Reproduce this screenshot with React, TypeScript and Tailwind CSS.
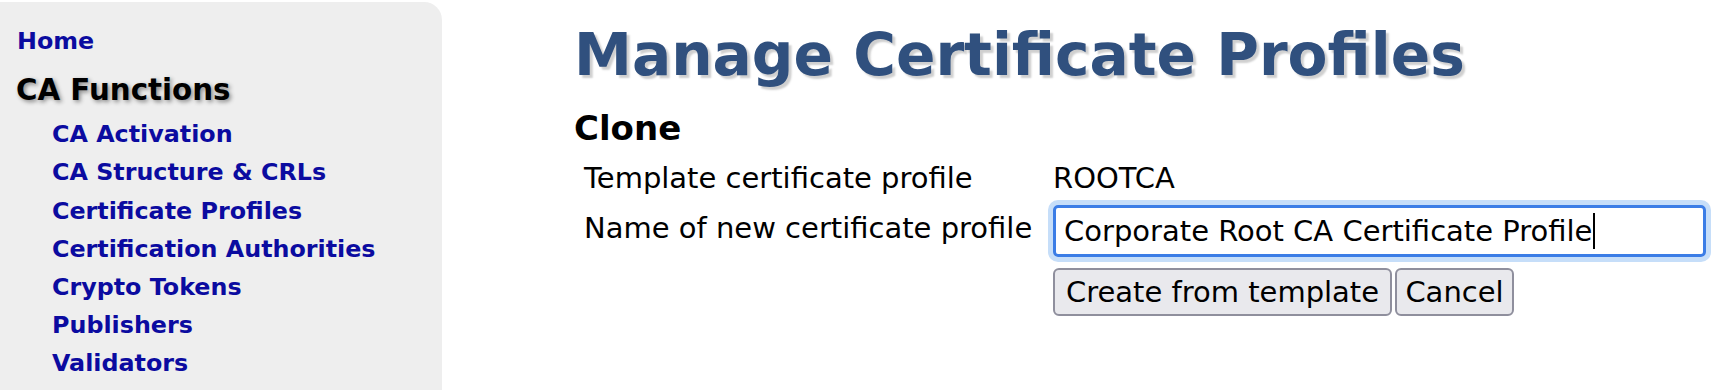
const MENU = [
  "CA Activation",
  "CA Structure & CRLs",
  "Certificate Profiles",
  "Certification Authorities",
  "Crypto Tokens",
  "Publishers",
  "Validators",
];

function Sidebar() {
  return (
    <nav className="w-[442px] shrink-0 mt-[2px] h-[388px] bg-[#eeeeee] rounded-tr-[18px] pt-[20px] pl-[16px]">
      <a href="#" className="block pl-[1px] text-[23.8px] leading-[38.2px] font-bold text-[#0b0ba0]">
        Home
      </a>
      <h3 className="mt-[10px] text-[29.3px] leading-[40px] font-bold text-black [text-shadow:2px_2px_4px_#8a8a8a]">
        CA Functions
      </h3>
      <ul className="mt-[5px] pl-[36px]">
        {MENU.map((item) => (
          <li key={item}>
            <a href="#" className="block text-[23.8px] leading-[38.2px] font-bold text-[#0b0ba0]">
              {item}
            </a>
          </li>
        ))}
      </ul>
    </nav>
  );
}

export default function App() {
  return (
    <div className="flex w-[1726px] h-[390px] overflow-hidden bg-white font-['DejaVu_Sans',Verdana,sans-serif] text-black">
      <Sidebar />

      <main className="flex-1 pl-[132px] pt-[20px]">
        <h1 className="text-[58.2px] leading-[70px] font-bold text-[#30507e] [text-shadow:3px_3px_2px_#cfcfcf]">
          Manage Certificate Profiles
        </h1>
        <h2 className="mt-[18px] text-[34px] leading-[40px] font-bold">Clone</h2>

        <div className="mt-[11px] grid grid-cols-[479px_auto] items-center text-[29px]">
          <div className="pl-[10px] leading-[38px]">Template certificate profile</div>
          <div className="leading-[38px]">ROOTCA</div>

          <div className="pl-[10px] leading-[38px] mt-[2px]">Name of new certificate profile</div>
          <div className="mt-[8px]">
            <div
              role="textbox"
              className="flex items-center w-[653px] h-[52px] px-[8px] border-[3px] border-[#3b7de6] rounded-[5px] shadow-[0_0_0_5px_#c6def9] leading-[38px]"
            >
              <span>Corporate Root CA Certificate Profile</span>
              <span className="ml-[1px] w-[1.5px] h-[36px] bg-black" />
            </div>
          </div>

          <div />
          <div className="mt-[11px] flex gap-[3px]">
            <button className="w-[339px] h-[48px] border-2 border-[#8f8f9d] rounded-[6px] bg-[#e9e9ed] leading-[38px]">
              Create from template
            </button>
            <button className="w-[119px] h-[48px] border-2 border-[#8f8f9d] rounded-[6px] bg-[#e9e9ed] leading-[38px]">
              Cancel
            </button>
          </div>
        </div>
      </main>
    </div>
  );
}
